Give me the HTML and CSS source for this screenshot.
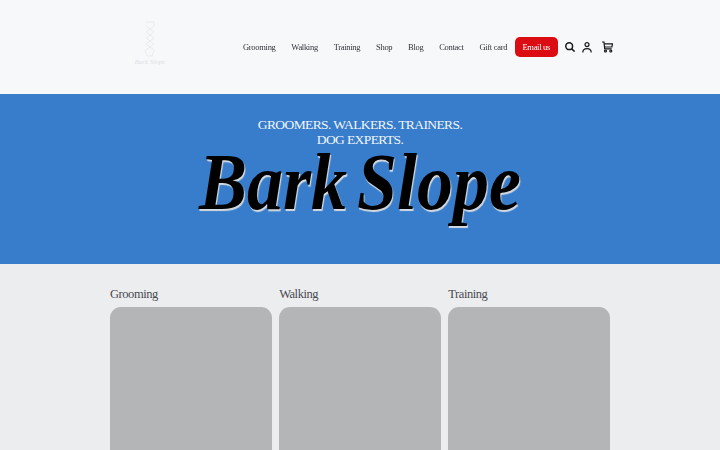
FILE: index.html
```html
<!DOCTYPE html>
<html lang="en">
<head>
    <meta charset="UTF-8">
    <title>Bark Slope</title>
    <link rel="stylesheet" href="styles.css">
</head>
<body>

    <!-- Header -->
    <header class="header">
        <div class="logo">
            <svg width="14" height="36" viewBox="0 0 14 36" fill="none" stroke="#e9ebee" stroke-width="1">
                <path d="M2 1h9v4l-8 6 8 6-8 6 8 6-2 6h-5l-2-6"/>
                <path d="M3 5l8 6-8 6 8 6-8 6"/>
            </svg>
            <span class="logo-text">Bark Slope</span>
        </div>
        <nav class="nav">
            <a href="#">Grooming</a>
            <a href="#">Walking</a>
            <a href="#">Training</a>
            <a href="#">Shop</a>
            <a href="#">Blog</a>
            <a href="#">Contact</a>
            <a href="#">Gift card</a>
            <a href="#" class="email-button">Email us</a>
        </nav>
        <div class="icons">
            <svg width="10" height="10" viewBox="0 0 10 10" fill="none" stroke="#16181c" stroke-width="1.5">
                <circle cx="4.2" cy="4.2" r="3.4"/>
                <path d="M6.6 6.6L9.6 9.6"/>
            </svg>
            <svg width="10" height="11" viewBox="0 0 10 11" fill="none" stroke="#16181c" stroke-width="1.2">
                <circle cx="5" cy="2.6" r="2"/>
                <path d="M.8 10.6c0-2.800 1.800-4 4.200-4s4.200 1.200 4.200 4"/>
            </svg>
            <svg class="cart" width="11" height="12" viewBox="0 0 11 12" fill="none" stroke="#16181c" stroke-width="1.2">
                <path d="M0 1h2l.7 6.800h7"/>
                <path d="M2.200 2.800h8.300l-.6 3.200h-7.200"/>
                <circle cx="3.500" cy="10" r="1"/>
                <circle cx="8.800" cy="10" r="1"/>
            </svg>
        </div>
    </header>

    <!-- Hero -->
    <section class="hero">
        <p class="tagline">GROOMERS. WALKERS. TRAINERS.<br>DOG EXPERTS.</p>
        <h1 class="hero-title">Bark Slope</h1>
    </section>

    <!-- Servicios -->
    <main class="services">
        <div class="service">
            <h2>Grooming</h2>
            <div class="service-image"></div>
        </div>
        <div class="service">
            <h2>Walking</h2>
            <div class="service-image"></div>
        </div>
        <div class="service">
            <h2>Training</h2>
            <div class="service-image"></div>
        </div>
    </main>

</body>
</html>
```

FILE: styles.css
```css
html, body {
    margin: 0;
    height: 450px;
    overflow: hidden;
}
body {
    background-color: #ecedef;
    font-family: "Liberation Serif", serif;
}

/* Header */
.header {
    display: flex;
    align-items: center;
    height: 94px;
    padding-left: 131px;
    background-color: #f7f8fa;
    box-sizing: border-box;
}
.logo {
    display: flex;
    flex-direction: column;
    align-items: center;
    width: 38px;
    margin-right: 74px;
    padding-bottom: 7px;
}
.logo-text {
    margin-top: 1px;
    color: #dfe1e4;
    font-size: 7px;
    font-style: italic;
    white-space: nowrap;
}
.nav {
    display: flex;
    align-items: center;
    gap: 15.8px;
    will-change: transform; /* texto sin franjas de color */
}
.nav a {
    color: #33363b;
    font-size: 8.5px;
    letter-spacing: -0.3px;
    text-decoration: none;
    white-space: nowrap;
}
.nav .email-button {
    margin-left: -8px;
    padding: 5px 7.5px;
    border-radius: 5px;
    background-color: #db0d12;
    color: white;
}
.icons {
    display: flex;
    align-items: center;
    gap: 7px;
    margin-left: 7px;
}
.cart {
    margin-left: 3px;
}

/* Hero */
.hero {
    height: 170px;
    padding-top: 23px;
    box-sizing: border-box;
    background-color: #377dcb;
    text-align: center;
}
.tagline {
    margin: 0;
    color: #f2f6fb;
    font-size: 13.5px;
    letter-spacing: -0.6px;
    line-height: 15px;
}
.hero-title {
    margin: 5px 0 0;
    color: black;
    font-size: 80px;
    font-style: italic;
    font-weight: bold;
    line-height: 60px;
    word-spacing: -9px;
    transform: scaleX(0.9);
    text-shadow: 1px 2px 1px #d5dbe2;
}

/* Servicios */
.services {
    display: flex;
    gap: 7.5px;
    width: 500px;
    margin: 0 auto;
    padding-top: 23px;
}
.service {
    flex: 1;
}
.service h2 {
    margin: 0 0 5px;
    color: #4a4b50;
    font-size: 12.5px;
    font-weight: normal;
    letter-spacing: -0.45px;
    line-height: 15px;
}
.service-image {
    height: 143px;
    border-radius: 11px 11px 0 0;
    background-color: #b4b5b7;
}
```
